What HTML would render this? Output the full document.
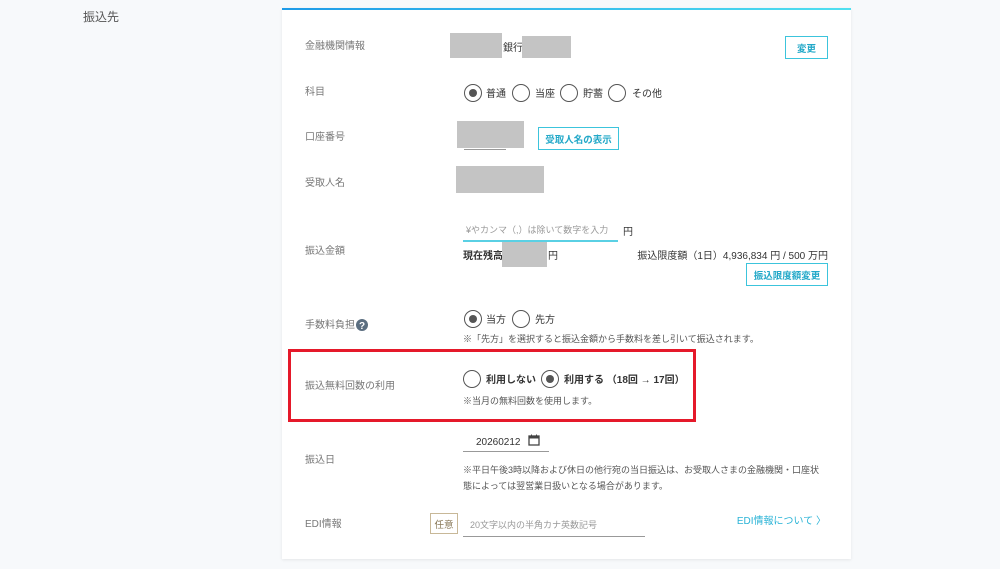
<!DOCTYPE html>
<html><head><meta charset="utf-8"><style>
*{margin:0;padding:0;box-sizing:border-box}
body{width:1000px;height:569px;background:#f7f9fb;font-family:"Liberation Sans","Noto Sans CJK JP",sans-serif;position:relative;overflow:hidden;color:#333}
.a{position:absolute;white-space:nowrap;line-height:1}
.card{position:absolute;left:282px;top:8px;width:569px;height:551px;background:#fff;box-shadow:0 1px 3px rgba(0,0,0,.08)}
.bar{position:absolute;left:282px;top:8px;width:569px;height:2px;background:linear-gradient(90deg,#1e9be8,#4fe0f0)}
.lb{font-size:10px;color:#777;margin-top:2px}
.t{font-size:10px;color:#333;margin-top:2px}
.g{position:absolute;background:#c4c4c4}
.btn{position:absolute;border:1px solid #3cc4dc;color:#22a8c8;font-size:9.5px;font-weight:bold;display:flex;align-items:center;justify-content:center;background:#fff}
.r{position:absolute;width:18px;height:18px;border:1px solid #555;border-radius:50%;background:#fff}
.r.on::after{content:"";position:absolute;left:4px;top:4px;width:8px;height:8px;border-radius:50%;background:#555}
.ul{position:absolute;height:1px;background:#999}
.note{font-size:9px;color:#555;margin-top:2px}
</style></head><body>
<div class="a" style="left:83px;top:11px;font-size:12px;color:#555">振込先</div>
<div class="card"></div><div class="bar"></div>

<div class="a lb" style="left:305px;top:40px">金融機関情報</div>
<div class="g" style="left:450px;top:33px;width:52px;height:25px"></div>
<div class="a t" style="left:503px;top:42px">銀行</div>
<div class="g" style="left:522px;top:36px;width:49px;height:22px"></div>
<div class="btn" style="left:785px;top:36px;width:43px;height:23px">変更</div>

<div class="a lb" style="left:305px;top:86px">科目</div>
<div class="r on" style="left:464px;top:84px"></div><div class="a t" style="left:486px;top:88px">普通</div>
<div class="r" style="left:512px;top:84px"></div><div class="a t" style="left:535px;top:88px">当座</div>
<div class="r" style="left:560px;top:84px"></div><div class="a t" style="left:583px;top:88px">貯蓄</div>
<div class="r" style="left:608px;top:84px"></div><div class="a t" style="left:632px;top:88px">その他</div>

<div class="a lb" style="left:305px;top:131px">口座番号</div>
<div class="g" style="left:457px;top:121px;width:67px;height:27px"></div>
<div class="ul" style="left:464px;top:149px;width:42px"></div>
<div class="btn" style="left:538px;top:127px;width:81px;height:23px">受取人名の表示</div>

<div class="a lb" style="left:305px;top:177px">受取人名</div>
<div class="g" style="left:456px;top:166px;width:88px;height:27px"></div>

<div class="a lb" style="left:305px;top:245px">振込金額</div>
<div class="a" style="left:466px;top:226px;font-size:9px;color:#999">¥やカンマ（,）は除いて数字を入力</div>
<div class="ul" style="left:463px;top:240px;width:155px;height:2px;background:#5ad0e4"></div>
<div class="a t" style="left:623px;top:226px">円</div>
<div class="a t" style="left:463px;top:250px;font-weight:bold">現在残高</div>
<div class="g" style="left:502px;top:242px;width:45px;height:25px"></div>
<div class="a t" style="left:548px;top:250px">円</div>
<div class="a t" style="right:172px;top:250px">振込限度額（1日）4,936,834 円 / 500 万円</div>
<div class="btn" style="left:746px;top:263px;width:82px;height:23px">振込限度額変更</div>

<div class="a lb" style="left:305px;top:319px">手数料負担</div>
<svg style="position:absolute;left:356px;top:319px" width="12" height="12"><circle cx="6" cy="6" r="6" fill="#5b6e80"/><text x="6" y="10" font-size="10" font-weight="bold" fill="#fff" text-anchor="middle" font-family="Liberation Sans">?</text></svg>
<div class="r on" style="left:464px;top:310px"></div><div class="a t" style="left:486px;top:314px">当方</div>
<div class="r" style="left:512px;top:310px"></div><div class="a t" style="left:535px;top:314px">先方</div>
<div class="a note" style="left:463px;top:333px">※「先方」を選択すると振込金額から手数料を差し引いて振込されます。</div>

<div style="position:absolute;left:288px;top:349px;width:408px;height:73px;border:3px solid #e5192a"></div>
<div class="a lb" style="left:305px;top:380px">振込無料回数の利用</div>
<div class="r" style="left:463px;top:370px"></div><div class="a t" style="left:486px;top:374px;font-weight:bold">利用しない</div>
<div class="r on" style="left:541px;top:370px"></div><div class="a t" style="left:564px;top:374px;font-weight:bold">利用する （18回 → 17回）</div>
<div class="a note" style="left:463px;top:395px">※当月の無料回数を使用します。</div>

<div class="a lb" style="left:305px;top:454px">振込日</div>
<div class="a t" style="left:476px;top:436px">20260212</div>
<svg style="position:absolute;left:528px;top:434px" width="12" height="12" viewBox="0 0 12 12"><rect x="1" y="2" width="10" height="9" fill="none" stroke="#444" stroke-width="1.3"/><rect x="1" y="2" width="10" height="2.5" fill="#444"/><line x1="3.5" y1="0.5" x2="3.5" y2="2.5" stroke="#444"/><line x1="8.5" y1="0.5" x2="8.5" y2="2.5" stroke="#444"/></svg>
<div class="ul" style="left:463px;top:451px;width:86px"></div>
<div class="a note" style="left:463px;top:464px">※平日午後3時以降および休日の他行宛の当日振込は、お受取人さまの金融機関・口座状</div>
<div class="a note" style="left:463px;top:480px">態によっては翌営業日扱いとなる場合があります。</div>

<div class="a lb" style="left:305px;top:518px">EDI情報</div>
<div style="position:absolute;left:430px;top:513px;width:28px;height:21px;border:1px solid #c8b898;color:#8a7a5a;font-size:9.5px;display:flex;align-items:center;justify-content:center">任意</div>
<div class="a" style="left:470px;top:521px;font-size:9px;color:#999">20文字以内の半角カナ英数記号</div>
<div class="ul" style="left:463px;top:536px;width:182px"></div>
<div class="a" style="right:174px;top:517px;font-size:10px;color:#29b3d6">EDI情報について 〉</div>
</body></html>
